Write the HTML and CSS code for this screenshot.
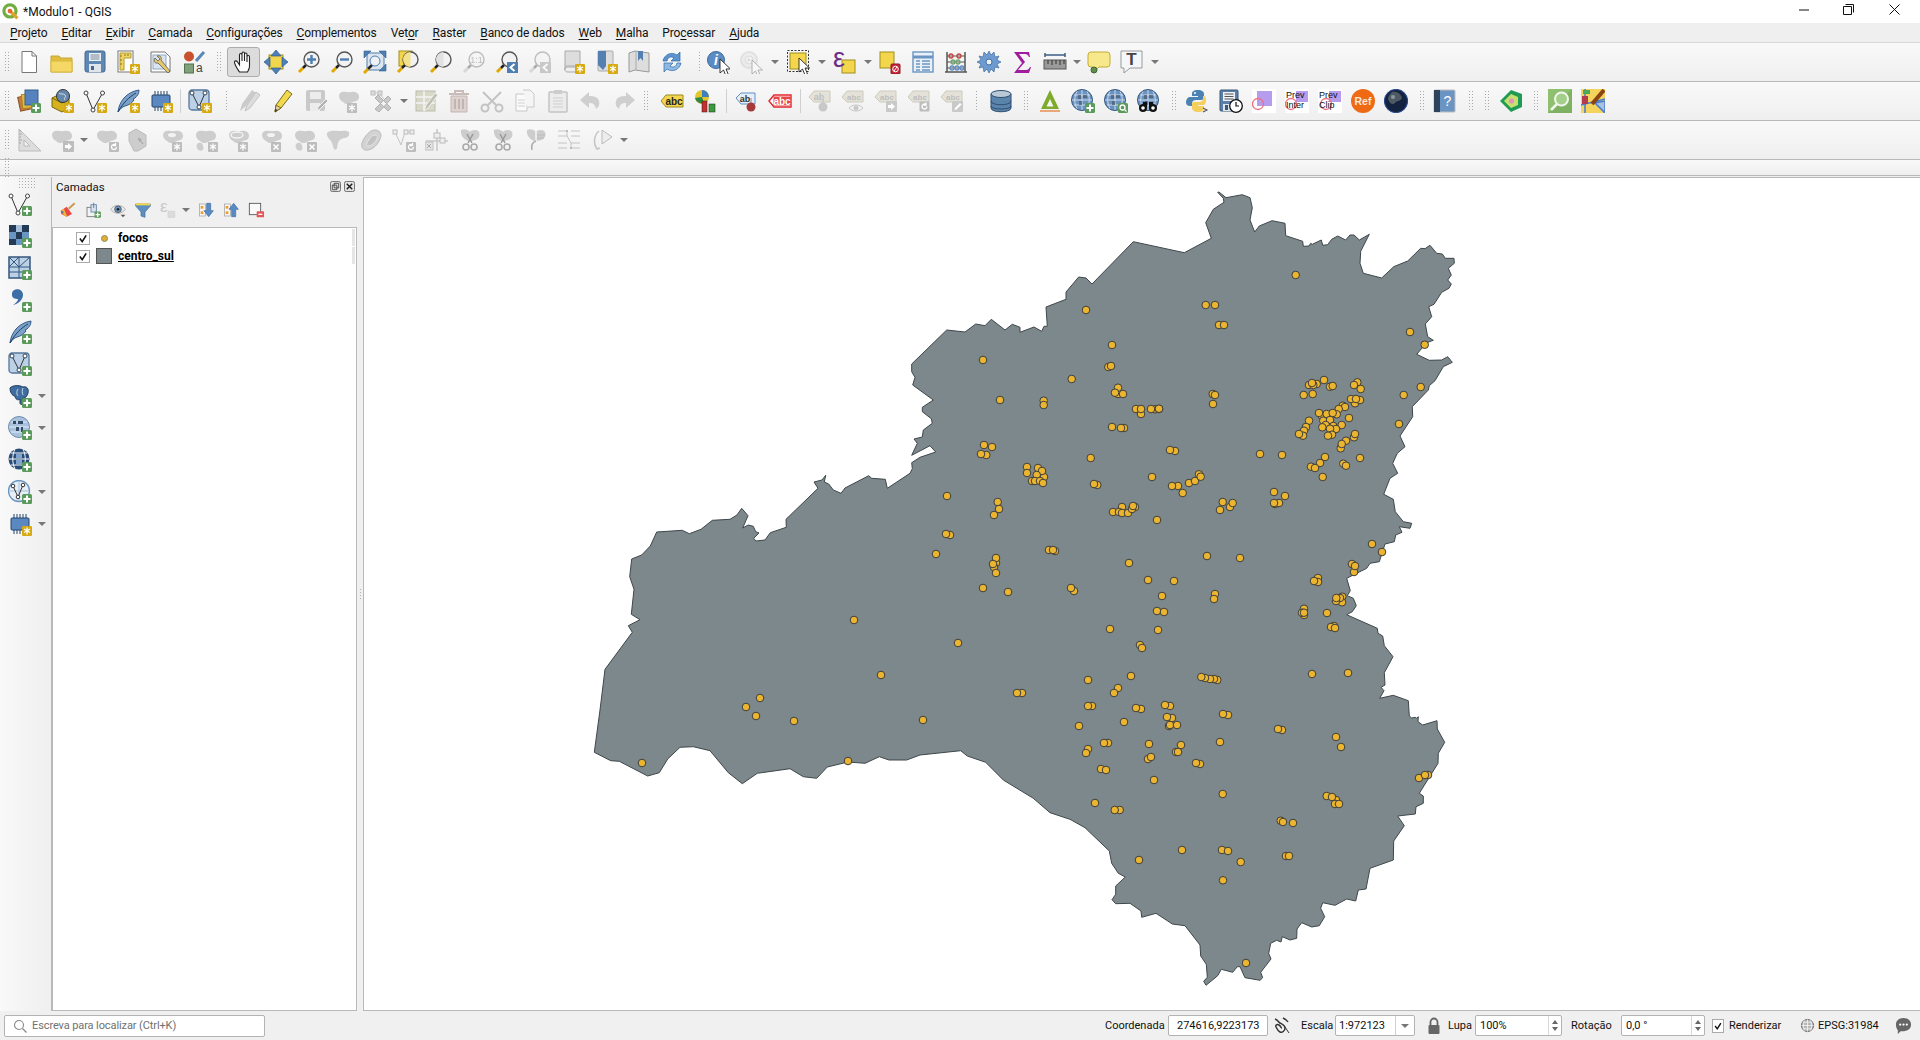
FILE: index.html
```html
<!DOCTYPE html>
<html lang="pt">
<head>
<meta charset="utf-8">
<title>*Modulo1 - QGIS</title>
<link rel="stylesheet" href="styles.css">
</head>
<body>
<svg class="defs" aria-hidden="true">
<defs>
<g id="bY"><rect x="14" y="14" width="10" height="10" rx="1" fill="#d6aa12"/><path d="M19 15.5v7M16 17l6 3.5M22 17l-6 3.5" stroke="#fff" stroke-width="1.3"/></g>
<g id="bG"><rect x="14" y="14" width="10" height="10" rx="1.5" fill="#5a9a5a"/><path d="M19 15.5v7M15.5 19h7" stroke="#fff" stroke-width="2"/></g>
<g id="bX"><rect x="14" y="14" width="10" height="10" rx="1" fill="#bdbdbd"/><path d="M16.5 16.5l5 5M21.5 16.5l-5 5" stroke="#fff" stroke-width="1.5"/></g>
<g id="bS"><rect x="14" y="14" width="10" height="10" rx="1" fill="#bdbdbd"/><path d="M19 15.5v7M16 17l6 3.5M22 17l-6 3.5" stroke="#fff" stroke-width="1.3"/></g>
<g id="bR"><rect x="14" y="14" width="10" height="10" rx="1" fill="#bdbdbd"/><path d="M21.500 19a2.500 2.500 0 1 1-1-2M20.500 15v2.500H18" fill="none" stroke="#fff" stroke-width="1.3"/></g>
<path id="blob" d="M2 7c0-4 4-5 8-4 3 1 5-1 8 0 4 1 5 5 3 8-2 2-5 1-7 3-3 2-6 1-8-1-2-1-4-3-4-6z" fill="#cdcdcd"/>
<g id="mag"><path d="M2 22l4-4" stroke="#e2a800" stroke-width="3"/><path d="M6 18l3-3" stroke="#222" stroke-width="2.500"/><circle cx="14.500" cy="9.500" r="7.500" fill="#f2f2f2" stroke="#555" stroke-width="1.400"/></g>
<g id="i-new"><path d="M5 1.500h10l4.500 4.500v16.500H5z" fill="#fff" stroke="#777"/><path d="M15 1.500V6h4.500" fill="none" stroke="#777"/></g>
<g id="i-open"><path d="M1 6h8l2 2h11v14H1z" fill="#e1bd3d" stroke="#c8a734"/><path d="M1 11h21v11H1z" fill="#f4d765" stroke="#d6b840"/></g>
<g id="i-save"><rect x="2" y="1" width="20" height="21" rx="2" fill="#5f89b4" stroke="#44698f"/><path d="M6 3h12v8H6z" fill="#e9eef3"/><path d="M7.500 5h9M7.500 7h9M7.500 9h9" stroke="#7a8b9c"/><rect x="6" y="14" width="12" height="8" fill="#dfe5ea"/><rect x="8" y="16" width="3" height="4" fill="#44698f"/></g>
<g id="i-layout"><rect x="2" y="1" width="15" height="21" fill="#fff" stroke="#777"/><path d="M4 3h11v5H8v12H4z" fill="#f0d467" stroke="#b49a2c"/><path d="M4 6h2M4 10h2M4 14h2M9 4v2M12 4v2" stroke="#8b7417"/><use href="#bY"/></g>
<g id="i-wrench"><path d="M2 2h14l5 5v15H2z" fill="#fff" stroke="#777"/><rect x="4" y="5" width="13" height="14" fill="#d9e4f0" stroke="#8fa9c6"/><path d="M8 6c3-1 5 1 4 4l9 11-2 2-10-10C6 14 4 11 6 8l3 3 2-2z" fill="#e4c66c" stroke="#5c5c5c" stroke-width=".8"/></g>
<g id="i-style"><circle cx="7" cy="6.500" r="5" fill="#c9512e"/><path d="M14 11L22 2" stroke="#5a86b8" stroke-width="3"/><rect x="2.500" y="14" width="9" height="9" fill="#7fa27a" stroke="#55704f"/><text x="14" y="22" class="svt n" font-size="12" fill="#444">a</text></g>
<g id="i-hand"><path transform="translate(1.500 0)" d="M7 22c-2-3-5-7-5-10 0-1.500 2-1.500 3 0l2 3V5c0-2 2.500-2 2.500 0v6V3.500c0-2 2.500-2 2.500 0V11V4.500c0-2 2.500-2 2.500 0V12V7c0-2 2.500-2 2.500 0v9c0 3-1 4-2 6z" fill="#fff" stroke="#222" stroke-width="1.100"/></g>
<g id="i-pansel"><rect x="5" y="5" width="14" height="14" fill="#f3d64b" stroke="#a08e1e"/><path d="M12 0l5 6H7zM12 24l5-6H7zM0 12l6-5v10zM24 12l-6-5v10z" fill="#4f81b8" stroke="#2f5a8a" stroke-width=".7"/></g>
<g id="i-zin"><use href="#mag"/><path d="M14.500 5v9M10 9.500h9" stroke="#4f7fb0" stroke-width="2.400"/></g>
<g id="i-zout"><use href="#mag"/><path d="M10 9.500h9" stroke="#4f7fb0" stroke-width="2.400"/></g>
<g id="i-zfull"><rect x="4" y="3" width="17" height="17" fill="#dde6ef" stroke="#4f7fb0"/><path d="M1 1h7L1 8zM23 1h-7l7 7zM23 21h-7l7-7z" fill="#4f7fb0" stroke="#335f8e" stroke-width=".6"/><path d="M5 19l5-5" stroke="#222" stroke-width="2.500"/><path d="M1 23l4-4" stroke="#e2a800" stroke-width="3"/><circle cx="12" cy="11" r="5" fill="#eef2f6" stroke="#4f7fb0"/></g>
<g id="i-zlayer"><rect x="3" y="1" width="13" height="15" fill="#f3d64b" stroke="#a08e1e"/><use href="#mag"/><path d="M14.500 2v15a7.500 7.500 0 0 1 0-15z" fill="#f3e28a"/></g>
<g id="i-zsel"><use href="#mag"/><path d="M14.500 2v15a7.500 7.500 0 0 1 0-15z" fill="#e1e1e1"/></g>
<g id="i-znat"><use href="#mag"/><text x="14.500" y="13" text-anchor="middle" class="svt n" font-size="9" fill="#555">1:1</text></g>
<g id="i-zlast"><use href="#mag"/><rect x="12" y="12" width="11" height="11" fill="#4f7fb0"/><path d="M19.500 14l-4 3.500 4 3.500" fill="none" stroke="#fff" stroke-width="2"/></g>
<g id="i-newmap"><path d="M4 1h15v15H6c-2 0-2 2-2 4z" fill="#ddd" stroke="#aaa"/><path d="M4 20c0-2 1-3 3-3h12v5H7c-2 0-3-1-3-2z" fill="#eee" stroke="#aaa"/><use href="#bY"/></g>
<g id="i-bmnew"><rect x="4" y="1" width="15" height="20" rx="1" fill="#ddd" stroke="#aaa"/><path d="M4 1h8v15l-3 4-5-5z" fill="#5380b0"/><use href="#bY"/></g>
<g id="i-bm"><path d="M2 3l6-2 14 2v19l-14-2-6 2z" fill="#ddd" stroke="#999"/><path d="M9 1v19" stroke="#aaa"/><path d="M11 1h5v10l-2.500-3-2.500 3z" fill="#5380b0"/></g>
<g id="i-refresh"><path d="M3 11C4 5 11 1 17 5l3-3v9h-9l3-3c-3-2-6-1-7 3z" fill="#5d93cf" stroke="#2d6aa6" stroke-width=".7"/><path d="M21 13c-1 6-8 10-14 6l-3 3v-9h9l-3 3c3 2 6 1 7-3z" fill="#8db8e4" stroke="#2d6aa6" stroke-width=".7"/></g>
<path id="cursor" d="M0 0l0 14 3.500-3 2.500 6 2.500-1-2.500-6h4.500z" fill="#fff" stroke="#222" stroke-width=".9"/>
<g id="i-info"><circle cx="10" cy="10" r="8.500" fill="#5b8bc4" stroke="#3e6b9e"/><text x="10" y="15" text-anchor="middle" class="svt" font-style="italic" font-size="14" fill="#fff">i</text><use href="#cursor" transform="translate(14 9)"/></g>
<g id="i-action"><circle cx="10" cy="10" r="8" fill="#dcdcdc" stroke="#bbb" stroke-width="2"/><circle cx="10" cy="10" r="4" fill="#f1f1f1" stroke="#aaa"/><path d="M8.500 8l4 2-4 2z" fill="#aaa"/><use href="#cursor" transform="translate(13 10)"/></g>
<g id="i-select"><rect x="3" y="3" width="16" height="16" fill="#f3d64b" stroke="#a08e1e"/><rect x=".500" y=".500" width="21" height="21" fill="none" stroke="#333" stroke-dasharray="2 1.500"/><use href="#cursor" transform="translate(12 8)"/></g>
<g id="i-selexp"><rect x="9" y="10" width="13" height="13" fill="#f3d64b" stroke="#a08e1e"/><text x="0" y="17" class="svt n" font-size="27" fill="#6b2d86">&#949;</text></g>
<g id="i-desel"><rect x="2" y="2" width="14" height="16" fill="#f3d64b" stroke="#a08e1e"/><rect x="13" y="14" width="9" height="10" rx="1" fill="#c8263a" stroke="#8e1625"/><circle cx="17.500" cy="19" r="2.800" fill="none" stroke="#fff"/><path d="M16 21l3-4" stroke="#fff"/></g>
<g id="i-table"><rect x="2" y="2" width="20" height="20" fill="#eaf0f7" stroke="#6a95c2" stroke-width="1.400"/><path d="M2 7h20" stroke="#6a95c2" stroke-width="3"/><path d="M5 11h4M11 11h8M5 14h4M11 14h8M5 17h4M11 17h8M5 20h4M11 20h8" stroke="#6a95c2" stroke-width="1.300"/></g>
<g id="i-calc"><path d="M3 2v20M21 2v20M1 22h22" stroke="#555" stroke-width="1.500"/><path d="M3 6h18M3 12h18M3 18h18" stroke="#555"/><circle cx="7" cy="6" r="2" fill="none" stroke="#c8453f" stroke-width="1.300"/><circle cx="15" cy="6" r="2" fill="none" stroke="#c8453f" stroke-width="1.300"/><circle cx="9" cy="12" r="2" fill="none" stroke="#6da56b" stroke-width="1.300"/><circle cx="14" cy="12" r="2" fill="none" stroke="#6da56b" stroke-width="1.300"/><circle cx="8" cy="18" r="2" fill="none" stroke="#5d8cc4" stroke-width="1.300"/><circle cx="13" cy="18" r="2" fill="none" stroke="#5d8cc4" stroke-width="1.300"/><circle cx="18" cy="18" r="2" fill="none" stroke="#5d8cc4" stroke-width="1.300"/></g>
<g id="i-gear"><path d="M12 1l2 4 3-3 1 5 4-1-2 4 4 2-4 2 2 4-4-1-1 5-3-3-2 4-2-4-3 3-1-5-4 1 2-4-4-2 4-2-2-4 4 1 1-5 3 3z" fill="#6d9ad0" stroke="#44709f" stroke-width=".7"/><circle cx="12" cy="12" r="3" fill="#eaf0f7" stroke="#44709f"/></g>
<g id="i-sigma"><path d="M4 2h15l1 5h-1c-1-2-2-3-4-3H9l6 8-7 8h8c2 0 3-1 4-3l1 0-2 6H4l8-10z" fill="#a01e9d"/></g>
<g id="i-measure"><path d="M2 3v4M22 3v4M2 5h20" stroke="#3d5e85" stroke-width="1.500"/><rect x="1" y="10" width="22" height="9" fill="#9a9a9a" stroke="#555"/><path d="M5 10v4M9 10v5M13 10v4M17 10v5M21 10v4" stroke="#333"/></g>
<g id="i-annot"><path d="M4 2h16a3 3 0 0 1 3 3v9a3 3 0 0 1-3 3H12l-6 6v-6H4a3 3 0 0 1-3-3V5a3 3 0 0 1 3-3z" fill="#f7e88c" stroke="#c3ad33"/><circle cx="7" cy="20" r="3" fill="#5f8f4c" stroke="#3d6530"/></g>
<g id="i-tannot"><path d="M1 1h21v17H10l-6 5v-5H1z" fill="#f4f7f9" stroke="#999"/><text x="11.500" y="15" text-anchor="middle" class="svt" font-family="Liberation Serif" font-size="17" fill="#444">T</text></g>
<g id="i-dsm"><rect x="2" y="7" width="12" height="14" fill="#c97a3f" stroke="#8a4f23" transform="rotate(-12 8 14)"/><rect x="5" y="5" width="12" height="14" fill="#e4b83a" stroke="#a9861d" transform="rotate(-6 11 12)"/><rect x="8" y="1" width="13" height="15" fill="#5683bd" stroke="#34608f"/><use href="#bG"/></g>
<g id="i-gpkg"><path d="M2 9l10-5 7 4v11l-7 4-10-5z" fill="#d6b21e" stroke="#7a6410"/><path d="M2 9l10 5 7-5" fill="none" stroke="#7a6410"/><circle cx="13" cy="7" r="6.500" fill="#6589ad" stroke="#333"/><path d="M9 4c2 2 4 0 6 2s-2 3 0 5" fill="none" stroke="#ddd"/><use href="#bY"/></g>
<g id="i-vbase"><path d="M3 4l7 17 9-16" fill="none" stroke="#333"/><path d="M3 4h0M19 5l3-1" stroke="#333"/><circle cx="3" cy="4" r="2" fill="#fff" stroke="#444"/><circle cx="10" cy="21" r="2" fill="#fff" stroke="#444"/><circle cx="19.500" cy="4" r="2" fill="#fff" stroke="#444"/></g>
<g id="i-shp"><use href="#i-vbase"/><use href="#bY"/></g>
<g id="i-shpG"><use href="#i-vbase"/><use href="#bG"/></g>
<g id="i-fbase"><path d="M2 23C3 13 10 3 23 1c0 4-2 6-4 8l-2 1 1 1c-2 3-5 5-9 6-3 1-5 3-7 6z" fill="#7ba1cb" stroke="#345c88"/><path d="M2 23C7 14 13 8 20 4" fill="none" stroke="#1f3f63"/></g>
<g id="i-feather"><use href="#i-fbase"/><use href="#bY"/></g>
<g id="i-featherG"><use href="#i-fbase"/><use href="#bG"/></g>
<g id="i-cbase"><rect x="3" y="6" width="18" height="12" rx="1" fill="#5b88c0" stroke="#24476d"/><path d="M6 2v4M9 2v4M12 2v4M15 2v4M18 2v4M6 18v4M9 18v4M12 18v4M15 18v4" stroke="#24476d"/></g>
<g id="i-chip"><use href="#i-cbase"/><use href="#bY"/></g>
<g id="i-vsq"><rect x="1" y="1" width="20" height="20" rx="3" fill="#bcd1e6" stroke="#56779c" stroke-width="1.300"/><path d="M4 4l7 14 6-14" fill="none" stroke="#334"/><circle cx="4" cy="4" r="2" fill="#fff" stroke="#345"/><circle cx="11" cy="18" r="2" fill="#fff" stroke="#345"/><circle cx="17" cy="4" r="2" fill="#fff" stroke="#345"/></g>
<g id="i-virt"><use href="#i-vsq"/><use href="#bY"/></g>
<g id="i-virtG"><use href="#i-vsq"/><use href="#bG"/></g>
<g id="i-pencil"><path d="M4 23l1-7L16 1l5 4-11 14z" fill="#f1d84c" stroke="#7a6a22"/><path d="M4 23l1-7 5 3z" fill="#e8cfa0" stroke="#7a6a22"/><path d="M4 23l.500-3 2 1z" fill="#222"/></g>
<g id="i-pencils"><path d="M2 22l2-7L14 1l4 3-11 14z" fill="#cbcbcb"/><path d="M7 22l2-6L18 3l4 3-10 13z" fill="#dcdcdc" stroke="#c3c3c3"/></g>
<g id="i-saveE"><rect x="2" y="1" width="19" height="21" rx="2" fill="#c9c9c9"/><rect x="6" y="3" width="11" height="7" fill="#ececec"/><rect x="6" y="14" width="10" height="8" fill="#ececec"/><path d="M13 22l1-4 8-8 2 2-8 8z" fill="#b2b2b2" stroke="#f2f2f2"/></g>
<g id="i-addF"><use href="#blob"/><use href="#bS" transform="translate(-4 0)"/></g>
<g id="i-vert"><path d="M3 4h6l5 6" fill="none" stroke="#c3c3c3"/><rect x="1" y="2" width="4" height="4" fill="#ddd" stroke="#bbb"/><rect x="8" y="2" width="4" height="4" fill="#ddd" stroke="#bbb"/><path d="M5 9l13 13 3-3L8 6zM5 20L18 7l3 3L9 23z" fill="#c8c8c8" stroke="#b0b0b0"/></g>
<g id="i-editA"><rect x="2" y="2" width="19" height="20" fill="#d8d8c8" stroke="#bcbcae"/><path d="M2 8h19M2 14h19M10 2v20" stroke="#f3f3f3" stroke-width="1.500"/><path d="M10 22l2-6 9-12 3 2-10 13z" fill="#c2c2b4" stroke="#f3f3f3"/></g>
<g id="i-trash"><path d="M2 5h20M8 5V2h8v3" fill="none" stroke="#c9bcb8" stroke-width="2"/><path d="M4 7h16v16H4z" fill="#ddd2cf" stroke="#c3b6b2"/><path d="M8 10v10M12 10v10M16 10v10" stroke="#b9aba7" stroke-width="1.500"/></g>
<g id="i-cut"><path d="M3 3l13 13M21 3L8 16" stroke="#c3c3c3" stroke-width="2"/><circle cx="5" cy="19" r="3.500" fill="none" stroke="#c3c3c3" stroke-width="2"/><circle cx="19" cy="19" r="3.500" fill="none" stroke="#c3c3c3" stroke-width="2"/></g>
<g id="i-copy"><path d="M3 5h8l3 3v14H3z" fill="#fafafa" stroke="#c8c8c8"/><path d="M10 1h7l4 4v13h-7" fill="#f5f5f5" stroke="#c8c8c8"/><path d="M5 11h7M5 14h7M5 17h7" stroke="#d0d0d0"/></g>
<g id="i-paste"><rect x="3" y="3" width="18" height="20" rx="1" fill="#ececec" stroke="#c3c3c3" stroke-width="1.500"/><rect x="8" y="1" width="8" height="4" fill="#ccc"/><path d="M7 9h10M7 12h10M7 15h10M7 18h10" stroke="#cfcfcf"/></g>
<g id="i-undo"><path d="M10 3L1 11l9 8v-5c4 0 6 1 7 6 3-2 4-5 3-8-1-4-5-5-10-5z" fill="#cfcfcf"/></g>
<g id="i-redo"><path d="M14 3l9 8-9 8v-5c-4 0-6 1-7 6-3-2-4-5-3-8 1-4 5-5 10-5z" fill="#cfcfcf"/></g>
<g id="i-labelY"><path d="M1 12l5-6h17v12H6z" fill="#f3d64b" stroke="#9a8a20"/><text x="14" y="15.500" text-anchor="middle" class="svt" font-family="Liberation Serif" font-size="10" fill="#222">abc</text></g>
<g id="i-diag"><circle cx="9" cy="8" r="7" fill="#e4c52c"/><path d="M9 8V1a7 7 0 0 1 7 7z" fill="#3f7fbd"/><path d="M9 8l-7 1a7 7 0 0 0 9 5z" fill="#2d8a40"/><rect x="9" y="12" width="5" height="11" fill="#c72e2e" stroke="#222" stroke-width=".5"/><rect x="16" y="15" width="6" height="8" fill="#3c9c3c" stroke="#222" stroke-width=".5"/></g>
<g id="i-pin"><path d="M1 9l5-5h14v11H6z" fill="#e6eef7" stroke="#5f8fc4"/><text x="10" y="13" text-anchor="middle" class="svt" font-size="9" fill="#333">ab</text><path d="M16 9v8" stroke="#bbb" stroke-width="2"/><circle cx="16" cy="18" r="4.500" fill="#a63a3a"/></g>
<g id="i-labelR"><path d="M1 12l5-6h17v12H6z" fill="#fff" stroke="#e0272c" stroke-width="1.400"/><path d="M5.500 7.500h17v9h-17z" fill="#e93a3e" opacity=".95"/><text x="14" y="15.500" text-anchor="middle" class="svt" font-family="Liberation Serif" font-size="10" fill="#fff">abc</text></g>
<g id="lg"><path d="M1 8l5-6h16v11H6z" fill="#e4e2d8" stroke="#cdcabd"/></g>
<g id="i-lpin"><use href="#lg"/><text x="11" y="11" text-anchor="middle" class="svt" font-size="9" fill="#bdbdbd">ab</text><path d="M15 8v8" stroke="#ccc" stroke-width="2"/><circle cx="15" cy="18" r="4.500" fill="#c8c8c8"/></g>
<g id="i-leye"><use href="#lg"/><text x="13" y="11" text-anchor="middle" class="svt" font-size="8" fill="#bdbdbd">abc</text><path d="M8 19c3-4 11-4 14 0-3 4-11 4-14 0z" fill="#f2f2f2" stroke="#c8c8c8"/><circle cx="15" cy="19" r="2.500" fill="#c8c8c8"/></g>
<g id="i-larr"><use href="#lg"/><text x="13" y="11" text-anchor="middle" class="svt" font-size="8" fill="#bdbdbd">abc</text><rect x="12" y="12" width="11" height="11" rx="1" fill="#c9c9c9"/><path d="M14 16h3v-2l4 3.500-4 3.500v-2h-3z" fill="#fff"/></g>
<g id="i-lrot"><use href="#lg"/><text x="13" y="11" text-anchor="middle" class="svt" font-size="8" fill="#bdbdbd">abc</text><use href="#bR" transform="translate(-1.500 -1.500)"/></g>
<g id="i-lpen"><use href="#lg"/><text x="13" y="11" text-anchor="middle" class="svt" font-size="8" fill="#bdbdbd">abc</text><rect x="12" y="12" width="11" height="11" rx="1" fill="#c9c9c9"/><path d="M14.500 21l.500-2 5-5 1.500 1.500-5 5z" fill="#fff"/></g>
<g id="i-db"><path d="M2 5v14c0 5 20 5 20 0V5z" fill="#5b84ad" stroke="#2f4f70"/><path d="M2 12c0 5 20 5 20 0M2 17c0 4 20 4 20 0" fill="none" stroke="#2f4f70"/><ellipse cx="12" cy="5" rx="10" ry="3.500" fill="#b9c9d8" stroke="#2f4f70"/></g>
<g id="i-grass"><path d="M12 1L3 20h18z" fill="#7eab2c"/><path d="M12 10l-3.500 7.500h7z" fill="#f6f6f6"/><path d="M2 22h20" stroke="#eaa878" stroke-width="2"/></g>
<g id="globe"><circle cx="11" cy="11" r="10.500" fill="#6b93c2" stroke="#33567e"/><path d="M1 11h20M11 1v20M3 6h16M3 16h16M6 2.500c-3 5-3 12 0 17M16 2.500c3 5 3 12 0 17" fill="none" stroke="#d4e0ed" stroke-width=".9"/><path d="M7 6h3v4H7zM12 6h4v3h-4zM8 12h3v4H8z" fill="#4a5968" opacity=".7"/></g>
<g id="i-gplus"><use href="#globe"/><use href="#bG"/></g>
<g id="i-gsearch"><use href="#globe"/><rect x="14" y="14" width="10" height="10" rx="1.500" fill="#5a9a5a"/><circle cx="18.500" cy="18.500" r="2.500" fill="none" stroke="#fff" stroke-width="1.300"/><path d="M20.500 20.500l2 2" stroke="#fff" stroke-width="1.300"/></g>
<g id="i-gbin"><use href="#globe"/><circle cx="6" cy="19" r="4" fill="#111"/><circle cx="16" cy="19" r="4" fill="#111"/><path d="M6 13h4v5H6zM12 13h4v5h-4z" fill="#111"/><circle cx="6" cy="19" r="1.800" fill="#fff"/><circle cx="16" cy="19" r="1.800" fill="#fff"/></g>
<g id="i-py"><path d="M12 1c-5 0-6 2-6 4v2h6v1H4c-2 0-4 2-4 5s2 4 4 4h2v-3c0-2 2-3 4-3h5c2 0 3-1 3-3V5c0-2-2-4-6-4z" fill="#4b82b4"/><path d="M12 23c5 0 6-2 6-4v-2h-6v-1h5c2 0 3-2 3-5s-1-4-2-4h-1v3c0 2-2 3-4 3H8c-2 0-2 1-2 3v3c0 2 2 4 6 4z" fill="#f4cf5b"/><circle cx="9" cy="4" r="1" fill="#fff"/><path d="M17 19l4 2-4 2" fill="none" stroke="#555" stroke-width="1.100"/></g>
<g id="i-clock"><rect x="1" y="1" width="18" height="21" rx="1" fill="#5b7fa8" stroke="#3a5877"/><rect x="4" y="3" width="12" height="9" fill="#eef1f5"/><path d="M5.500 5h9M5.500 7.500h9M5.500 10h9" stroke="#555"/><rect x="4" y="15" width="9" height="7" fill="#dfe5ea"/><rect x="6" y="16" width="3" height="5" fill="#3a5877"/><circle cx="17" cy="17" r="6.300" fill="#fff" stroke="#111" stroke-width="1.300"/><path d="M17 13v4h3" fill="none" stroke="#111" stroke-width="1.200"/></g>
<g id="i-prev"><rect width="24" height="24" fill="#fff"/><rect x="5" y="2" width="15" height="15" fill="#b69ced"/><circle cx="6" cy="15" r="5.500" fill="none" stroke="#ee7080" stroke-width="1.300"/></g>
<g id="i-prevI"><rect width="24" height="24" fill="#fff"/><rect x="11" y="2" width="12" height="11" fill="#b69ced"/><circle cx="6" cy="15" r="5.500" fill="none" stroke="#ee7080" stroke-width="1.300"/><text x="1" y="9" class="svt n" font-size="9" font-family="Liberation Mono" fill="#111">Prev</text><text x="1" y="19" class="svt n" font-size="9" font-family="Liberation Mono" fill="#111">Inter</text></g>
<g id="i-prevC"><rect width="24" height="24" fill="#fff"/><rect x="11" y="2" width="12" height="11" fill="#b69ced"/><circle cx="8" cy="15" r="5.500" fill="none" stroke="#ee7080" stroke-width="1.300"/><text x="1" y="9" class="svt n" font-size="9" font-family="Liberation Mono" fill="#111">Prev</text><text x="1" y="19" class="svt n" font-size="9" font-family="Liberation Mono" fill="#111">Clip</text></g>
<g id="i-ref"><circle cx="12" cy="12" r="12" fill="#ef6a15"/><text x="12" y="16" text-anchor="middle" class="svt" font-size="10.500" fill="#f7e7d9">Ref</text></g>
<g id="i-earth"><circle cx="12" cy="12" r="11.500" fill="#14233f" stroke="#2a4b8c" stroke-width="1.200"/><path d="M8 3c5-1 9 2 10 6-2 4-5 2-7 5-3 3-6-1-7-4 0-3 2-5 4-7z" fill="#4d5a64"/><circle cx="9" cy="8" r="2" fill="#8b97a0"/></g>
<g id="i-book"><rect x="1" y="1" width="21" height="22" rx="1" fill="#6a95c2" stroke="#bcbcbc"/><rect x="1" y="1" width="6" height="22" fill="#2d435b"/><text x="14.500" y="17" text-anchor="middle" class="svt n" font-family="Liberation Serif" font-size="14" fill="#fff">?</text></g>
<g id="i-pent"><path d="M12 1l11 4v13l-11 5L1 12z" fill="#1f9b54"/><path d="M12 5l7 3v8l-7 3-7-7z" fill="#c6e070"/><circle cx="12.500" cy="12" r="2.500" fill="#e58fc0"/></g>
<g id="i-sgreen"><rect width="24" height="24" fill="#8fc06f"/><path d="M24 0v24H0z" fill="#6ea254" opacity=".5"/><circle cx="13.500" cy="10" r="6.500" fill="#a4cf8a" stroke="#f2f7ee" stroke-width="2"/><path d="M3 21l6-6" stroke="#f2f7ee" stroke-width="2.500"/></g>
<g id="i-mapb"><rect width="24" height="24" fill="#f4d45d"/><path d="M0 16l24-6M4 0v24M14 14l10 10V12z" stroke="#4c7ed0" stroke-width="1.600" fill="#a8c3e2"/><rect x="1" y="7" width="6" height="8" fill="#b23c4c"/><rect x="2" y="1" width="7" height="4" fill="#4caa5a"/><path d="M11 15L23 1" stroke="#8b4513" stroke-width="4"/></g>
<g id="s-sq"><path d="M2 1v22h22z" fill="#ddd" stroke="#bbb"/><path d="M7 12v6h6z" fill="#f0f0f0" stroke="#bbb"/><path d="M2 3h2M2 6h3M2 9h2M2 12h3M2 15h2" stroke="#aaa"/></g>
<g id="s-1"><use href="#blob"/><rect x="13" y="13" width="11" height="11" rx="1" fill="#bdbdbd"/><path d="M15 17h3v-2l4 3.500-4 3.500v-2h-3z" fill="#fff"/></g>
<g id="s-2"><use href="#blob"/><use href="#bR"/></g>
<g id="s-3"><path d="M8 1l10 6v11l-8 5H6L1 13V5z" fill="#cdcdcd" stroke="#bbb"/><path d="M10 10l5 6" stroke="#999"/><path d="M10 10l4 1-3 3z" fill="#aaa"/></g>
<g id="s-4"><use href="#blob"/><ellipse cx="11" cy="7" rx="4" ry="2" fill="#f3f3f3"/><use href="#bS" transform="translate(-3 0)"/></g>
<g id="s-5"><use href="#blob"/><path d="M2 18c0-3 4-5 6-3s3 7 0 8-6-2-6-5z" fill="#cdcdcd" stroke="#f4f4f4"/><use href="#bS"/></g>
<g id="s-6"><use href="#blob"/><ellipse cx="10" cy="7" rx="6" ry="3" fill="none" stroke="#f3f3f3" stroke-width="1.500"/><use href="#bS" transform="translate(-3 0)"/></g>
<g id="s-7"><use href="#blob"/><ellipse cx="11" cy="7" rx="4" ry="2" fill="#f3f3f3"/><use href="#bX" transform="translate(-3 0)"/></g>
<g id="s-8"><use href="#blob"/><path d="M2 18c0-3 4-5 6-3s3 7 0 8-6-2-6-5z" fill="#cdcdcd" stroke="#f4f4f4"/><use href="#bX"/></g>
<g id="s-9"><path d="M1 5c3-3 8-2 11-2s8-1 11 1c1 4-2 6-5 6-3 1-5 2-6 5s0 6-3 7c-2-2-2-4-3-7-1-3-6-6-5-10z" fill="#cdcdcd"/></g>
<g id="s-10"><path d="M17 2c5 1 6 5 4 9-2 5-6 10-12 11-5 1-7-3-6-7 2-6 8-14 14-13z" fill="#d3d3d3" stroke="#bbb"/><path d="M16 7c2 0 3 2 2 4-2 3-4 6-8 7-2 0-3-1-2-3 2-4 5-8 8-8z" fill="#c2c2c2" stroke="#e6e6e6"/></g>
<g id="s-11"><path d="M3 4l6 13 4-13h6" fill="none" stroke="#c4c4c4"/><rect x="1" y="2" width="4" height="4" fill="#eee" stroke="#bbb"/><rect x="12" y="2" width="4" height="4" fill="#eee" stroke="#bbb"/><rect x="18" y="2" width="4" height="4" fill="#eee" stroke="#bbb"/><use href="#bR"/></g>
<g id="s-12"><path d="M12 1v22M1 13h22" stroke="#c8c8c8" stroke-width="1.600"/><rect x="9" y="5" width="6" height="5" fill="#eee" stroke="#bbb"/><rect x="15" y="10" width="5" height="5" fill="#eee" stroke="#bbb"/><rect x="0" y="14" width="8" height="8" fill="#e3e3e3" stroke="#c0c0c0"/><path d="M2 16l4 4M6 16l-4 4" stroke="#aaa"/></g>
<g id="s-13"><path d="M3 2c3-2 8 0 9 2 1-2 7-3 9 0 2 5-2 9-9 9-5 0-10-5-9-11z" fill="#cdcdcd"/><path d="M9 6l5 9M15 6l-5 9" stroke="#999" stroke-width="1.500"/><circle cx="8" cy="19" r="3" fill="none" stroke="#aaa" stroke-width="1.600"/><circle cx="16" cy="19" r="3" fill="none" stroke="#aaa" stroke-width="1.600"/></g>
<g id="s-14"><path d="M3 2c3-2 8 0 9 2 1-2 7-3 9 0 2 5-2 9-9 9-5 0-10-5-9-11z" fill="#cdcdcd"/><path d="M12 3v12" stroke="#f4f4f4" stroke-width="1.500"/><path d="M12 13c-3 1-5 4-4 9" fill="none" stroke="#aaa" stroke-width="1.500"/><path d="M13 7h8M13 10h7" stroke="#bbb"/></g>
<g id="s-15"><path d="M1 3h9M14 3h9M1 8h9M14 8h9M1 15h9M14 15h9M1 20h9M14 20h9M10 3v5M14 15v5M10 8l4 7" fill="none" stroke="#c4c4c4"/><rect x="9" y="2" width="2" height="2" fill="#bbb"/><rect x="13" y="19" width="2" height="2" fill="#bbb"/></g>
<g id="s-16"><path d="M12 2v14l10-7zM12 18" fill="#ededed" stroke="#bbb"/><path d="M9 3C4 7 3 15 7 21l3-1" fill="none" stroke="#c4c4c4" stroke-width="1.500"/></g>
<g id="l-raster"><rect x="1" y="1" width="20" height="20" fill="#6a95c2"/><path d="M1 1h7v7H1zM14 1h7v7h-7zM8 8h6v7H8zM1 15h7v6H1z" fill="#243b57"/><path d="M8 1h6v7H8z" fill="#a6c0dc"/><use href="#bG"/></g>
<g id="l-mesh"><rect x="1" y="1" width="21" height="21" fill="#bcd1e6" stroke="#33567e" stroke-width="1.500"/><path d="M1 1l10 10M11 1L1 11M11 1v21M22 1L11 11M1 11h21M1 16h21" stroke="#33567e"/><use href="#bG"/></g>
<g id="l-comma"><path d="M5 3c3-3 10-2 10 4 0 5-5 9-10 10 3-2 5-4 5-6-3 0-6-1-6-4 0-2 0-3 1-4z" fill="#3d6ea5"/><use href="#bG"/></g>
<g id="l-pg"><path d="M2 4c3-3 9-3 13-1 4-1 6 2 5 6-1 3-2 5-5 5v5c0 2-3 2-3 0v-4c-2 2-5 0-5-3-3 0-5-4-5-8z" fill="#3f6da0" stroke="#1f3f63"/><path d="M10 5c-2 3-1 6 0 7M15 4c-1 2-1 5 0 7" stroke="#cfdbe8" fill="none"/><use href="#bG"/></g>
<g id="l-wms"><circle cx="11" cy="11" r="10.500" fill="#a9c1dc" stroke="#6a8cb0"/><path d="M3 6h16M1 11h20M3 16h16" stroke="#e3ecf5"/><path d="M5 5h3v3H5zM10 5h5v3h-5zM8 11h3v4H8zM13 11h2v5h-2z" fill="#314a66"/><use href="#bG"/></g>
<g id="l-wcs"><circle cx="11" cy="11" r="10.500" fill="#294d78"/><path d="M1 11h20M3 5h16M3 17h16" stroke="#fff"/><path d="M7 1c-3 6-3 14 0 20M15 1c3 6 3 14 0 20" stroke="#fff" fill="none"/><path d="M8 6h6v4H8zM8 12h6v4H8z" fill="#7fa5cf"/><use href="#bG"/></g>
<g id="l-wfs"><circle cx="11" cy="11" r="10.500" fill="#e6eef7" stroke="#6a95c2" stroke-width="1.300"/><path d="M1 11h20M11 1v20" stroke="#a9c1dc"/><path d="M5 6l5 11 5-12" fill="none" stroke="#333"/><circle cx="5" cy="6" r="1.800" fill="#fff" stroke="#333"/><circle cx="10" cy="17" r="1.800" fill="#fff" stroke="#333"/><circle cx="15" cy="5" r="1.800" fill="#fff" stroke="#333"/><use href="#bG"/></g>
<g id="p-brush"><path d="M1 13l9-6 8 11-8 4-8-4z" fill="#e44"/><path d="M1 13l5-3 5 12-4-1z" fill="#e8b83a"/><path d="M2 14l3 2" stroke="#3c6ea8" stroke-width="2"/><path d="M13 10l9-8" stroke="#c99c50" stroke-width="3"/></g>
<g id="p-dup"><rect x="3" y="8" width="13" height="14" fill="#f2f2f2" stroke="#777" stroke-width="1.300"/><rect x="9" y="4" width="8" height="11" fill="#d9e2ec" stroke="#5f82a8" stroke-width="1.300"/><path d="M13 1v8" stroke="#5f82a8" stroke-width="1.400"/><use href="#bG" transform="translate(1 1) scale(.95)"/></g>
<g id="p-eye"><path d="M1 11c5-8 17-8 22 0-5 8-17 8-22 0z" fill="#e9e9e9" stroke="#999"/><circle cx="12" cy="11" r="5" fill="#6a95c2" stroke="#444"/><circle cx="12" cy="11" r="2" fill="#222"/><path d="M16 19h7l-3.500 4z" fill="#555"/></g>
<g id="p-funnel"><path d="M1 3h22v3l-8 9v8l-6-2v-6L1 6z" fill="#5f8fbf" stroke="#3e6b9e"/><path d="M1 2h22v3H1z" fill="#f0d64a"/></g>
<g id="p-exp"><text x="0" y="15" class="svt n" font-size="26" fill="#c9c9c9">&#949;</text><path d="M12 14h10v9H12z" fill="#dcdcdc" stroke="#cfcfcf"/></g>
<g id="p-down"><rect x="2" y="3" width="9" height="18" fill="#f6f6f6" stroke="#999"/><rect x="4" y="6" width="4" height="4" fill="#ef9d2b"/><rect x="4" y="14" width="4" height="4" fill="#ef9d2b"/><path d="M13 2h6v11h4l-7 9-7-9h4z" fill="#5b8bc4" stroke="#3e6b9e"/></g>
<g id="p-up"><rect x="2" y="3" width="9" height="18" fill="#f6f6f6" stroke="#999"/><rect x="4" y="6" width="4" height="4" fill="#ef9d2b"/><rect x="4" y="14" width="4" height="4" fill="#ef9d2b"/><path d="M13 22h6V11h4l-7-9-7 9h4z" fill="#5b8bc4" stroke="#3e6b9e"/></g>
<g id="p-rem"><rect x="2" y="2" width="17" height="17" fill="#fafafa" stroke="#555" stroke-width="1.300"/><rect x="13" y="14" width="11" height="9" rx="1" fill="#e4565a"/><path d="M15.500 18.500h6" stroke="#fff" stroke-width="2"/></g>
</defs>
</svg>

<div class="app">
<header class="titlebar">
  <svg class="qlogo" viewBox="0 0 16 16"><circle cx="7.500" cy="7.500" r="5.700" fill="none" stroke="#6fae3f" stroke-width="3"/><path d="M7.500 7.500l7 7" stroke="#e2a02d" stroke-width="3"/><circle cx="7.500" cy="7.500" r="2.200" fill="#e9672f"/></svg>
  <span class="title">*Modulo1 - QGIS</span>
  <div class="winbtns">
    <svg viewBox="0 0 12 12"><path d="M2 6h10" stroke="#111"/></svg>
    <svg viewBox="0 0 12 12"><path d="M2.500 .5h8v8M.5 2.500h8v8h-8z" fill="none" stroke="#111"/></svg>
    <svg viewBox="0 0 12 12"><path d="M.5 .5l10 10M10.500 .5l-10 10" stroke="#111"/></svg>
  </div>
</header>
<nav class="menubar">
  <span><u>P</u>rojeto</span><span><u>E</u>ditar</span><span><u>E</u>xibir</span><span><u>C</u>amada</span><span><u>C</u>onfigurações</span><span><u>C</u>omplementos</span><span>Vet<u>o</u>r</span><span><u>R</u>aster</span><span><u>B</u>anco de dados</span><span><u>W</u>eb</span><span><u>M</u>alha</span><span>Pro<u>c</u>essar</span><span><u>A</u>juda</span>
</nav>

<div class="tb">
  <i class="hd h8"></i>
  <b><svg viewBox="0 0 24 24"><use href="#i-new"/></svg></b><b><svg viewBox="0 0 24 24"><use href="#i-open"/></svg></b><b><svg viewBox="0 0 24 24"><use href="#i-save"/></svg></b><b><svg viewBox="0 0 24 24"><use href="#i-layout"/></svg></b><b><svg viewBox="0 0 24 24"><use href="#i-wrench"/></svg></b><b><svg viewBox="0 0 24 24"><use href="#i-style"/></svg></b>
  <i class="hd h15 t1"></i>
  <b class="on"><svg viewBox="0 0 24 24"><use href="#i-hand"/></svg></b><b><svg viewBox="0 0 24 24"><use href="#i-pansel"/></svg></b><b><svg viewBox="0 0 24 24"><use href="#i-zin"/></svg></b><b><svg viewBox="0 0 24 24"><use href="#i-zout"/></svg></b><b><svg viewBox="0 0 24 24"><use href="#i-zfull"/></svg></b><b><svg viewBox="0 0 24 24"><use href="#i-zlayer"/></svg></b><b><svg viewBox="0 0 24 24"><use href="#i-zsel"/></svg></b><b class="off"><svg viewBox="0 0 24 24"><use href="#i-znat"/></svg></b><b><svg viewBox="0 0 24 24"><use href="#i-zlast"/></svg></b><b class="off"><svg viewBox="0 0 24 24"><use href="#i-zlast"/></svg></b><b><svg viewBox="0 0 24 24"><use href="#i-newmap"/></svg></b><b><svg viewBox="0 0 24 24"><use href="#i-bmnew"/></svg></b><b><svg viewBox="0 0 24 24"><use href="#i-bm"/></svg></b><b><svg viewBox="0 0 24 24"><use href="#i-refresh"/></svg></b>
  <i class="hd h13"></i>
  <b><svg viewBox="0 0 24 24"><use href="#i-info"/></svg></b><b class="off"><svg viewBox="0 0 24 24"><use href="#i-action"/></svg></b><em class="ar a15"></em><b><svg viewBox="0 0 24 24"><use href="#i-select"/></svg></b><em class="ar a13"></em><b><svg viewBox="0 0 24 24"><use href="#i-selexp"/></svg></b><em class="ar a12"></em><b><svg viewBox="0 0 24 24"><use href="#i-desel"/></svg></b><b><svg viewBox="0 0 24 24"><use href="#i-table"/></svg></b><b><svg viewBox="0 0 24 24"><use href="#i-calc"/></svg></b><b><svg viewBox="0 0 24 24"><use href="#i-gear"/></svg></b><b><svg viewBox="0 0 24 24"><use href="#i-sigma"/></svg></b><b><svg viewBox="0 0 24 24"><use href="#i-measure"/></svg></b><em class="ar a11"></em><b><svg viewBox="0 0 24 24"><use href="#i-annot"/></svg></b><b><svg viewBox="0 0 24 24"><use href="#i-tannot"/></svg></b><em class="ar a12"></em>
</div>

<div class="tb">
  <i class="hd h8"></i>
  <b><svg viewBox="0 0 24 24"><use href="#i-dsm"/></svg></b><b><svg viewBox="0 0 24 24"><use href="#i-gpkg"/></svg></b><b><svg viewBox="0 0 24 24"><use href="#i-shp"/></svg></b><b><svg viewBox="0 0 24 24"><use href="#i-feather"/></svg></b><b><svg viewBox="0 0 24 24"><use href="#i-chip"/></svg></b>
  <i class="sp w6"></i>
  <b><svg viewBox="0 0 24 24"><use href="#i-virt"/></svg></b>
  <i class="hd h18"></i>
  <b><svg viewBox="0 0 24 24"><use href="#i-pencils"/></svg></b><b><svg viewBox="0 0 24 24"><use href="#i-pencil"/></svg></b><b><svg viewBox="0 0 24 24"><use href="#i-saveE"/></svg></b><b><svg viewBox="0 0 24 24"><use href="#i-addF"/></svg></b><b><svg viewBox="0 0 24 24"><use href="#i-vert"/></svg></b><em class="ar a11"></em><b><svg viewBox="0 0 24 24"><use href="#i-editA"/></svg></b><b><svg viewBox="0 0 24 24"><use href="#i-trash"/></svg></b><b><svg viewBox="0 0 24 24"><use href="#i-cut"/></svg></b><b><svg viewBox="0 0 24 24"><use href="#i-copy"/></svg></b><b><svg viewBox="0 0 24 24"><use href="#i-paste"/></svg></b><b><svg viewBox="0 0 24 24"><use href="#i-undo"/></svg></b><b><svg viewBox="0 0 24 24"><use href="#i-redo"/></svg></b>
  <i class="hd h14"></i>
  <b><svg viewBox="0 0 24 24"><use href="#i-labelY"/></svg></b><b><svg viewBox="0 0 24 24"><use href="#i-diag"/></svg></b>
  <i class="sp w9"></i>
  <b><svg viewBox="0 0 24 24"><use href="#i-pin"/></svg></b><b><svg viewBox="0 0 24 24"><use href="#i-labelR"/></svg></b>
  <i class="sp w7"></i>
  <b><svg viewBox="0 0 24 24"><use href="#i-lpin"/></svg></b><b><svg viewBox="0 0 24 24"><use href="#i-leye"/></svg></b><b><svg viewBox="0 0 24 24"><use href="#i-larr"/></svg></b><b><svg viewBox="0 0 24 24"><use href="#i-lrot"/></svg></b><b><svg viewBox="0 0 24 24"><use href="#i-lpen"/></svg></b>
  <i class="hd h15"></i>
  <b><svg viewBox="0 0 24 24"><use href="#i-db"/></svg></b>
  <i class="hd h16"></i>
  <b><svg viewBox="0 0 24 24"><use href="#i-grass"/></svg></b><b><svg viewBox="0 0 24 24"><use href="#i-gplus"/></svg></b><b><svg viewBox="0 0 24 24"><use href="#i-gsearch"/></svg></b><b><svg viewBox="0 0 24 24"><use href="#i-gbin"/></svg></b>
  <i class="hd h16"></i>
  <b><svg viewBox="0 0 24 24"><use href="#i-py"/></svg></b><b><svg viewBox="0 0 24 24"><use href="#i-clock"/></svg></b><b><svg viewBox="0 0 24 24"><use href="#i-prev"/></svg></b><b><svg viewBox="0 0 24 24"><use href="#i-prevI"/></svg></b><b><svg viewBox="0 0 24 24"><use href="#i-prevC"/></svg></b><b><svg viewBox="0 0 24 24"><use href="#i-ref"/></svg></b><b><svg viewBox="0 0 24 24"><use href="#i-earth"/></svg></b>
  <i class="hd h16"></i>
  <b><svg viewBox="0 0 24 24"><use href="#i-book"/></svg></b>
  <i class="hd h16"></i><i class="hd h16"></i>
  <b><svg viewBox="0 0 24 24"><use href="#i-pent"/></svg></b>
  <i class="hd h16"></i>
  <b><svg viewBox="0 0 24 24"><use href="#i-sgreen"/></svg></b><b><svg viewBox="0 0 24 24"><use href="#i-mapb"/></svg></b>
</div>

<div class="tb">
  <i class="hd h8"></i>
  <b><svg viewBox="0 0 24 24"><use href="#s-sq"/></svg></b><b><svg viewBox="0 0 24 24"><use href="#s-1"/></svg></b><em class="ar a12"></em><b><svg viewBox="0 0 24 24"><use href="#s-2"/></svg></b><b><svg viewBox="0 0 24 24"><use href="#s-3"/></svg></b><b><svg viewBox="0 0 24 24"><use href="#s-4"/></svg></b><b><svg viewBox="0 0 24 24"><use href="#s-5"/></svg></b><b><svg viewBox="0 0 24 24"><use href="#s-6"/></svg></b><b><svg viewBox="0 0 24 24"><use href="#s-7"/></svg></b><b><svg viewBox="0 0 24 24"><use href="#s-8"/></svg></b><b><svg viewBox="0 0 24 24"><use href="#s-9"/></svg></b><b><svg viewBox="0 0 24 24"><use href="#s-10"/></svg></b><b><svg viewBox="0 0 24 24"><use href="#s-11"/></svg></b><b><svg viewBox="0 0 24 24"><use href="#s-12"/></svg></b><b><svg viewBox="0 0 24 24"><use href="#s-13"/></svg></b><b><svg viewBox="0 0 24 24"><use href="#s-13"/></svg></b><b><svg viewBox="0 0 24 24"><use href="#s-14"/></svg></b><b><svg viewBox="0 0 24 24"><use href="#s-15"/></svg></b><b><svg viewBox="0 0 24 24"><use href="#s-16"/></svg></b><em class="ar a12"></em>
</div>
<div class="tb short"><i class="hd h8"></i></div>

<main class="main">
  <aside class="lefttb">
    <i class="hdh"></i>
    <div class="lrow"><svg viewBox="0 0 24 24"><use href="#i-shpG"/></svg></div>
    <div class="lrow"><svg viewBox="0 0 24 24"><use href="#l-raster"/></svg></div>
    <div class="lrow"><svg viewBox="0 0 24 24"><use href="#l-mesh"/></svg></div>
    <div class="lrow"><svg viewBox="0 0 24 24"><use href="#l-comma"/></svg></div>
    <div class="lrow"><svg viewBox="0 0 24 24"><use href="#i-featherG"/></svg></div>
    <div class="lrow"><svg viewBox="0 0 24 24"><use href="#i-virtG"/></svg></div>
    <div class="lrow"><svg viewBox="0 0 24 24"><use href="#l-pg"/></svg><em class="ar a12"></em></div>
    <div class="lrow"><svg viewBox="0 0 24 24"><use href="#l-wms"/></svg><em class="ar a12"></em></div>
    <div class="lrow"><svg viewBox="0 0 24 24"><use href="#l-wcs"/></svg></div>
    <div class="lrow"><svg viewBox="0 0 24 24"><use href="#l-wfs"/></svg><em class="ar a12"></em></div>
    <div class="lrow"><svg viewBox="0 0 24 24"><use href="#i-chip"/></svg><em class="ar a12"></em></div>
  </aside>
  <section class="panel">
    <div class="ptitle"><span>Camadas</span>
      <div class="pbtns">
        <svg viewBox="0 0 12 12"><rect x=".5" y=".5" width="11" height="11" rx="2" fill="#e4e4e4" stroke="#666"/><path d="M4.500 2.500h5v5h-5zM2.500 4.500h5v5h-5z" fill="none" stroke="#444"/></svg>
        <svg viewBox="0 0 12 12"><rect x=".5" y=".5" width="11" height="11" rx="2" fill="#e4e4e4" stroke="#666"/><path d="M3 3l6 6M9 3l-6 6" stroke="#222" stroke-width="1.600"/></svg>
      </div>
    </div>
    <div class="ptools">
      <svg viewBox="0 0 24 24"><use href="#p-brush"/></svg><svg viewBox="0 0 24 24"><use href="#p-dup"/></svg><svg viewBox="0 0 24 24"><use href="#p-eye"/></svg><svg viewBox="0 0 24 24"><use href="#p-funnel"/></svg><svg viewBox="0 0 24 24"><use href="#p-exp"/></svg><em class="ar a12"></em><svg viewBox="0 0 24 24"><use href="#p-down"/></svg><svg viewBox="0 0 24 24"><use href="#p-up"/></svg><svg viewBox="0 0 24 24"><use href="#p-rem"/></svg>
    </div>
    <div class="tree">
      <div class="node"><span class="chk"><svg viewBox="0 0 14 14"><path d="M3 7l3 4 5-8" fill="none" stroke="#111" stroke-width="2"/></svg></span><span class="sym"><span class="dot"></span></span><span class="nm">focos</span></div>
      <div class="node"><span class="chk"><svg viewBox="0 0 14 14"><path d="M3 7l3 4 5-8" fill="none" stroke="#111" stroke-width="2"/></svg></span><span class="sym"><span class="sw"></span></span><span class="nm ul">centro_sul</span></div>
    </div>
  </section>
  <div class="split"><i></i></div>
  <section class="canvas">
    <svg class="map" viewBox="364 178 1555 832">
      <polygon class="region" points="594.3,752.3 600,710 605,669.3 632.3,632.3 628.3,625.7 640,619.7 631.300,614.300 634,589.300 629.700,576.700 631.700,559 641.700,555 650.300,546 656.700,532 682.300,530.300 689.300,533.700 701,529.300 712.300,520.300 730,519.300 737,515 741.700,508.300 748,515.700 742.700,528 748.300,525 753.300,526.300 755.700,531.700 759,533 753.700,538.300 756,541 765,540 770.300,532.700 786.300,527.300 786,519.300 818,488.300 814,482 822,480 825.700,475.300 824.300,482 828.700,484 833.300,490 841,493.300 845,488 868.700,475.700 871.700,478.300 885.300,479.300 887.300,488.300 910,473.300 912.300,468.700 911.700,462.700 920,457.300 935.700,452 930,445.700 911.700,455.300 917.300,443.300 914,439 922.300,437 923.300,430 932.300,423.300 931.300,418.700 922.300,411.700 922.300,407.300 933.300,400 912.700,385 915,377.300 911.700,371.700 911.700,364 946.700,330 965,332 975.700,324 985,325.700 991.300,319.300 1005,330 1012.300,324.300 1020,327.300 1020,332.300 1034,327 1041.700,331.300 1044,326.300 1047.300,326.300 1046,307 1066,299.300 1066,292 1078.700,277 1086,278 1092,284 1133.300,241.700 1184.300,252.700 1211.300,238.300 1205.700,222.700 1213.300,209.300 1224,202.300 1223.300,198.300 1217.700,192.300 1219,192 1226,197.700 1242.300,194.700 1250,197.700 1252.300,207.700 1250,220 1254.700,232 1259.300,226 1272,220.700 1285,223.300 1285.700,235.700 1302.700,241.300 1303.300,246.300 1309,246 1310.700,243.300 1312.300,244.300 1321.300,240 1322.700,245.300 1327.700,244.700 1331.700,239.300 1337.700,236 1345.700,240 1350,235 1354,235 1359.300,240 1369.300,234.300 1360.700,251.300 1360,263.300 1363.300,273.300 1381.700,278 1393.700,266.700 1407.700,261 1420.700,248.300 1425,248.700 1430,245.300 1436.700,253.300 1442.300,254 1445.300,258.300 1454,258.300 1454.300,263.300 1448.300,268.300 1451.300,275 1447.700,280 1451.300,284 1449,288.300 1441.700,292.300 1434,304.300 1428.700,306.700 1431.700,316.700 1425.300,324 1427.700,336.700 1433.300,340.300 1426.700,342.700 1416.700,354.300 1429.300,360.300 1441.700,360 1447.700,356.700 1452.300,362.300 1443.300,366.700 1435,380.700 1429.300,385.700 1428.300,390 1412.300,406.700 1412.700,416.700 1400,436 1405,446.700 1397.300,453.300 1392.700,463.300 1397.700,473.300 1390,478.300 1383.700,494.300 1393.300,499.300 1395.300,511.700 1403.300,521.700 1411.700,523.300 1410,528.300 1399.300,526.700 1402,532.300 1395.700,535 1394.300,541.700 1385,544 1379.300,561.700 1370,563.300 1366.700,568.300 1346.700,578.300 1350.300,590.700 1347.300,595.700 1353.300,598.300 1356.300,605.700 1352.300,611.700 1346.700,614.700 1377.300,628.300 1378,633.300 1382.700,636 1384.300,645.700 1393,656.700 1384.300,672.700 1385,685 1381,687.300 1384,690.700 1379.700,698.300 1393.300,695.300 1408.300,700.700 1409.300,716 1411.700,718 1415.700,717.300 1416.700,718.300 1418.300,716.700 1418,721.700 1422.700,725 1437,720.700 1437.300,729 1444.700,742.300 1438.300,753.300 1438,763.300 1419.300,793.300 1423.300,796 1423.300,803.300 1416,806.700 1415.300,814 1397.700,816 1404.300,825.700 1393.700,841 1393.300,860 1370,868.300 1366,889 1358.300,890 1355.700,901 1346.700,899 1335,905.300 1322.700,902.700 1320.700,908.300 1324.700,916.700 1319.300,925.700 1311.700,927 1301.700,922.700 1297,929 1296.700,938.300 1290,940 1282.300,936.700 1281,942 1276.700,940.300 1270.700,943.300 1268.700,953.300 1271,959 1260.700,972.300 1262.700,977.700 1260,980.300 1245,977.700 1240,966.700 1237.300,966.700 1232.700,972.300 1221.300,969.300 1217.700,975.700 1206,985.300 1203.700,981.300 1207.300,977.300 1206.300,964.300 1200.700,956 1200,945 1185,925.700 1172.300,924 1156,913.300 1141.700,917.300 1141,911 1130,903.300 1115.700,903.700 1112,899.700 1115.700,894.300 1115.700,886 1125.300,877 1118.300,873.300 1111.700,863.300 1109.300,851 1085,827.700 1070,819.300 1050,812.700 1033.300,798.300 1003.300,780 985.700,762.300 967.300,756 960.700,750.700 920,755 906.700,760 889,760 879.300,756.700 865,763.300 848,762 827.300,767 816.700,778.300 803.300,776.700 790,768.700 757.300,773.300 742.300,783.700 728.300,772.700 710,750.700 693.300,746.700 680,747.300 667.700,759 659.300,772.700 647.700,776 619.300,761.300 610.700,760.700"/>
      <g class="pts">
<circle cx="642" cy="763"/><circle cx="760" cy="698"/><circle cx="746" cy="707"/><circle cx="756" cy="716"/><circle cx="794" cy="721"/><circle cx="848" cy="761"/><circle cx="854" cy="620"/><circle cx="881" cy="675"/><circle cx="923" cy="720"/><circle cx="958" cy="643"/>
<circle cx="1086" cy="310"/><circle cx="983" cy="360"/><circle cx="1112" cy="345"/><circle cx="1108.300" cy="367"/><circle cx="1111" cy="366"/><circle cx="1071.700" cy="379"/><circle cx="1000" cy="400"/><circle cx="1043.700" cy="400.700"/><circle cx="1043.700" cy="405"/><circle cx="1118" cy="394"/><circle cx="1118" cy="387.700"/><circle cx="1115" cy="392.700"/><circle cx="1123" cy="394"/><circle cx="1136" cy="409"/><circle cx="1141" cy="414"/><circle cx="1141" cy="409"/><circle cx="1155" cy="409.300"/><circle cx="1151" cy="409"/><circle cx="1159" cy="409"/><circle cx="1112" cy="427"/><circle cx="1124" cy="428"/><circle cx="1121" cy="428"/>
<circle cx="984" cy="445"/><circle cx="992" cy="447"/><circle cx="986.300" cy="455"/><circle cx="981" cy="454"/><circle cx="1090.700" cy="458"/><circle cx="1027" cy="467"/><circle cx="1027" cy="473"/><circle cx="1038" cy="468"/><circle cx="1044" cy="477"/><circle cx="1042" cy="471"/><circle cx="1036.700" cy="475"/><circle cx="1032" cy="481"/><circle cx="1035" cy="481"/><circle cx="1040" cy="481"/><circle cx="1043" cy="483"/>
<circle cx="1152" cy="477"/><circle cx="1097.300" cy="485"/><circle cx="1094" cy="484"/><circle cx="947" cy="496"/><circle cx="997.700" cy="502"/><circle cx="999" cy="509"/><circle cx="994" cy="515"/><circle cx="950" cy="535"/><circle cx="946" cy="534"/><circle cx="936" cy="554"/>
<circle cx="1055" cy="551"/><circle cx="1049" cy="550"/><circle cx="1053" cy="550"/><circle cx="996" cy="563"/><circle cx="996" cy="558"/><circle cx="994" cy="567"/><circle cx="993" cy="564"/><circle cx="996" cy="573"/><circle cx="983" cy="588"/><circle cx="1008" cy="592"/><circle cx="1074" cy="591"/><circle cx="1071" cy="588"/><circle cx="1022" cy="693"/><circle cx="1017" cy="693"/>
<circle cx="1110" cy="629"/><circle cx="1140" cy="645"/><circle cx="1142" cy="648"/><circle cx="1131" cy="676"/><circle cx="1088" cy="680"/><circle cx="1118" cy="688"/><circle cx="1114" cy="693"/><circle cx="1092" cy="706"/><circle cx="1088" cy="706"/><circle cx="1141" cy="709"/><circle cx="1136" cy="708"/><circle cx="1170" cy="706"/><circle cx="1165" cy="705"/><circle cx="1172" cy="718"/><circle cx="1167" cy="717"/><circle cx="1124" cy="722"/><circle cx="1079" cy="726"/><circle cx="1169" cy="726"/><circle cx="1170" cy="725"/><circle cx="1177" cy="725"/>
<circle cx="1295.700" cy="275"/><circle cx="1205.700" cy="305"/><circle cx="1215" cy="305"/><circle cx="1219" cy="325"/><circle cx="1224" cy="325"/><circle cx="1410" cy="332"/><circle cx="1424.700" cy="344.700"/><circle cx="1420.700" cy="387"/><circle cx="1403.700" cy="395"/><circle cx="1399" cy="424"/>
<circle cx="1324" cy="380"/><circle cx="1316.700" cy="384"/><circle cx="1309" cy="385"/><circle cx="1313.300" cy="385"/><circle cx="1312" cy="383"/><circle cx="1330" cy="386.700"/><circle cx="1332.700" cy="386"/><circle cx="1357.300" cy="382.300"/><circle cx="1354" cy="385"/><circle cx="1360.700" cy="389"/><circle cx="1303.700" cy="395"/><circle cx="1312.700" cy="394"/><circle cx="1355" cy="403.300"/><circle cx="1351" cy="399"/><circle cx="1360" cy="400"/><circle cx="1356" cy="399"/><circle cx="1342.700" cy="405.700"/><circle cx="1345" cy="407"/><circle cx="1338.700" cy="409"/><circle cx="1336.700" cy="414.300"/><circle cx="1321.700" cy="415.700"/><circle cx="1319" cy="413"/><circle cx="1326.700" cy="414"/><circle cx="1332.700" cy="413"/><circle cx="1349" cy="418"/><circle cx="1309" cy="420.700"/><circle cx="1326.700" cy="421.700"/><circle cx="1323.300" cy="420.700"/><circle cx="1330" cy="420"/><circle cx="1341.700" cy="425"/><circle cx="1325.700" cy="425"/><circle cx="1333.300" cy="426"/><circle cx="1322.300" cy="427.300"/><circle cx="1336" cy="429"/><circle cx="1330" cy="428.700"/><circle cx="1306" cy="427"/><circle cx="1304" cy="430.700"/><circle cx="1303" cy="435.700"/><circle cx="1299" cy="434"/><circle cx="1332" cy="434.700"/><circle cx="1328" cy="435.700"/><circle cx="1354" cy="437.300"/><circle cx="1355" cy="434"/><circle cx="1346" cy="440.700"/><circle cx="1340.700" cy="448.300"/><circle cx="1341.700" cy="444"/><circle cx="1260" cy="454"/><circle cx="1282" cy="455"/><circle cx="1325" cy="457"/><circle cx="1320" cy="463"/><circle cx="1311" cy="466.700"/><circle cx="1315" cy="468"/><circle cx="1343.300" cy="463.700"/><circle cx="1346" cy="465.700"/><circle cx="1360" cy="458"/><circle cx="1322.700" cy="477"/>
<circle cx="1212.700" cy="394"/><circle cx="1215" cy="395"/><circle cx="1213" cy="404"/><circle cx="1159" cy="408.700"/><circle cx="1175" cy="451"/><circle cx="1170" cy="450"/><circle cx="1178" cy="486"/><circle cx="1172" cy="486"/><circle cx="1182.700" cy="493"/><circle cx="1189" cy="483"/><circle cx="1195" cy="481"/><circle cx="1199" cy="474.300"/><circle cx="1200.700" cy="476.700"/><circle cx="1274" cy="492"/><circle cx="1285" cy="496"/>
<circle cx="1122" cy="507"/><circle cx="1113" cy="512"/><circle cx="1119" cy="512"/><circle cx="1122" cy="513"/><circle cx="1128" cy="513"/><circle cx="1135" cy="507"/><circle cx="1132" cy="509"/><circle cx="1133" cy="506"/><circle cx="1157" cy="520"/><circle cx="1222.700" cy="502"/><circle cx="1230" cy="507"/><circle cx="1232.700" cy="503"/><circle cx="1220" cy="510"/><circle cx="1275" cy="504"/><circle cx="1279" cy="503"/><circle cx="1274" cy="503"/>
<circle cx="1129" cy="563"/><circle cx="1207" cy="556"/><circle cx="1240" cy="558"/><circle cx="1372" cy="544"/><circle cx="1382" cy="552"/><circle cx="1352" cy="564"/><circle cx="1354" cy="572"/><circle cx="1355" cy="566"/><circle cx="1318" cy="578"/><circle cx="1318" cy="582"/><circle cx="1314" cy="581"/><circle cx="1148" cy="580"/><circle cx="1174" cy="581"/><circle cx="1162" cy="596"/><circle cx="1215" cy="594"/><circle cx="1214" cy="599"/>
<circle cx="1342.300" cy="596.700"/><circle cx="1342" cy="602.300"/><circle cx="1340" cy="598"/><circle cx="1336" cy="601"/><circle cx="1336.300" cy="598"/><circle cx="1304" cy="608.700"/><circle cx="1304" cy="615"/><circle cx="1302" cy="612.700"/><circle cx="1304" cy="612.700"/><circle cx="1157" cy="611"/><circle cx="1164" cy="612"/><circle cx="1327" cy="613"/><circle cx="1334" cy="626"/><circle cx="1331" cy="627"/><circle cx="1335" cy="628"/><circle cx="1158" cy="630"/>
<circle cx="1217.300" cy="680"/><circle cx="1214" cy="679"/><circle cx="1210" cy="679"/><circle cx="1205" cy="678"/><circle cx="1201.300" cy="677"/><circle cx="1312" cy="674"/><circle cx="1348" cy="673"/><circle cx="1228" cy="715"/><circle cx="1223" cy="714"/><circle cx="1282" cy="730"/><circle cx="1278" cy="729"/><circle cx="1220" cy="742"/><circle cx="1336" cy="737"/><circle cx="1341" cy="747"/><circle cx="1108" cy="743"/><circle cx="1104" cy="743"/><circle cx="1149" cy="744"/><circle cx="1181" cy="745"/><circle cx="1088" cy="749"/><circle cx="1086" cy="753"/><circle cx="1176" cy="752"/><circle cx="1178" cy="752"/><circle cx="1148" cy="759"/><circle cx="1151" cy="757"/><circle cx="1200" cy="764"/><circle cx="1196" cy="763"/><circle cx="1101" cy="769"/><circle cx="1106" cy="770"/><circle cx="1154" cy="780"/><circle cx="1428" cy="775"/><circle cx="1419" cy="778"/><circle cx="1425" cy="775"/>
<circle cx="1222.700" cy="794"/><circle cx="1095" cy="803"/><circle cx="1119.700" cy="810"/><circle cx="1114.700" cy="810"/><circle cx="1326.700" cy="796"/><circle cx="1336" cy="800"/><circle cx="1332" cy="797"/><circle cx="1335" cy="804"/><circle cx="1339" cy="804"/><circle cx="1280.700" cy="820.700"/><circle cx="1283" cy="822"/><circle cx="1293" cy="823"/><circle cx="1182" cy="850"/><circle cx="1222" cy="850"/><circle cx="1228" cy="851"/><circle cx="1240.700" cy="862"/><circle cx="1139" cy="860"/><circle cx="1286" cy="856"/><circle cx="1289" cy="856"/><circle cx="1223" cy="880.300"/><circle cx="1246" cy="963"/>
      </g>
    </svg>
  </section>
</main>

<footer class="status">
  <div class="locator"><svg viewBox="0 0 14 14"><circle cx="6" cy="6" r="4.500" fill="none" stroke="#888" stroke-width="1.100"/><path d="M9.500 9.500l4 4" stroke="#888" stroke-width="1.300"/></svg><span>Escreva para localizar (Ctrl+K)</span></div>
  <div class="sright">
    <span class="lb w60">Coordenada</span>
    <span class="inp w100">274616,9223173</span>
    <svg class="sic m4" viewBox="0 0 18 18"><path d="M3 2c3 1 3 3 5 4s5 2 5 5-3 5-5 4-3-3-4-5 1-3 3-2 2 3 3 3M11 1c2 1 4 2 5 4" fill="none" stroke="#333" stroke-width="1.500"/><path d="M13 10l4 6" stroke="#333"/></svg>
    <span class="lb w31 m11">Escala</span>
    <span class="inp w80 combo">1:972123<em class="ar"></em></span>
    <svg class="sic lock" viewBox="0 0 16 18"><path d="M4.500 8V5a3.500 3.500 0 0 1 7 0v3" fill="none" stroke="#666" stroke-width="1.800"/><rect x="2.500" y="8" width="11" height="9" rx="1" fill="#666"/></svg>
    <span class="lb w25 m6">Lupa</span>
    <span class="inp w87 spin">100%<span class="sp2"></span></span>
    <span class="lb w40 m9">Rotação</span>
    <span class="inp w84 spin m10">0,0 °<span class="sp2"></span></span>
    <span class="chk2"><svg viewBox="0 0 14 14"><path d="M3 7l3 4 5-8" fill="none" stroke="#111" stroke-width="2"/></svg></span>
    <span class="lb w52 m5">Renderizar</span>
    <svg class="sic2" viewBox="0 0 16 16"><circle cx="8" cy="8" r="6.500" fill="#b8b8b8" stroke="#666"/><path d="M1.500 8h13M8 1.500v13M3 4.500h10M3 11.500h10M5 2.500c-2 4-2 7 0 11M11 2.500c2 4 2 7 0 11" fill="none" stroke="#fff" stroke-width=".7"/></svg>
    <span class="lb w61 m3">EPSG:31984</span>
    <svg class="sic3" viewBox="0 0 18 18"><path d="M9 1c5 0 8 3 8 7s-3 7-8 7H6l-3 3v-4c-1-1-2-3-2-6 0-4 3-7 8-7z" fill="#666"/><circle cx="5.500" cy="8" r="1.200" fill="#fff"/><circle cx="9" cy="8" r="1.200" fill="#fff"/><circle cx="12.500" cy="8" r="1.200" fill="#fff"/></svg>
  </div>
</footer>
</div>
</body>
</html>
```

FILE: styles.css
```css
* { box-sizing: border-box; }
html, body { margin: 0; padding: 0; height: 100%; overflow: hidden; }
body { font-family: "Roboto", "Liberation Sans", sans-serif; font-size: 12px; color: #111; background: #f0f0f0; }
.defs { width: 0; height: 0; display: block; position: absolute; }
.svt { font-family: "Liberation Sans", sans-serif; font-weight: 700; }
.svt.n { font-weight: 400; }

.app { width: 1920px; height: 1040px; display: flex; flex-direction: column; }

.titlebar { height: 23px; background: #fff; display: flex; align-items: center; padding-left: 2px; flex: none; }
.qlogo { width: 17px; height: 17px; flex: none; }
.title { margin-left: 4px; font-size: 12px; }
.winbtns { margin-left: auto; display: flex; gap: 34px; padding-right: 19px; align-items: center; height: 100%; padding-bottom: 3px; }
.winbtns svg { width: 12px; height: 12px; display: block; }

.menubar { height: 20px; background: #efefef; border-bottom: 1px solid #d8d8d8; display: flex; gap: 14px; padding-left: 10px; align-items: center; flex: none; font-size: 12px; letter-spacing: -.12px; }
.menubar span { white-space: nowrap; }
.menubar u { text-underline-offset: 2px; }

.tb { height: 39px; flex: none; display: flex; align-items: center; background: linear-gradient(#f9f9f9, #efefef); border-bottom: 1px solid #b9b9b9; padding-left: 4px; }
.tb.short { height: 16px; }
.tb b { width: 33px; height: 30px; flex: none; display: flex; align-items: center; justify-content: center; }
.tb b svg { width: 24px; height: 24px; display: block; }
.tb b.off svg { filter: grayscale(1) opacity(.35); }
.tb b.on { background: #dcdcdc; border: 1px solid #adadad; border-radius: 3px; }

.hd { display: block; flex: none; height: 22px; background-image: radial-gradient(circle, #a9a9a9 .7px, transparent .9px); background-size: 3px 3px; background-repeat: repeat; background-clip: content-box; }
.h8 { width: 8px; padding: 0 3px 0 0; }
.h13 { width: 13px; padding: 0 0 0 9px; }
.h14 { width: 15.5px; padding: 0 7.5px 0 3px; height: 22px; }
.h15 { width: 15.5px; padding: 0 5px 0 5px; }
.h15.t1 { width: 16.5px; padding: 0 6px 0 5px; }
.h16 { width: 16.25px; padding: 0 5px 0 6px; }
.h18 { width: 17px; padding: 0 4px 0 8px; }

.sp { display: block; flex: none; height: 24px; position: relative; }
.sp::after { content: ""; display: block; width: 1px; height: 100%; background: #cfcfcf; margin: 0 auto; }
.w6 { width: 6px; } .w7 { width: 7px; } .w9 { width: 9px; }

.ar { display: flex; align-items: center; justify-content: center; flex: none; width: 12px; height: 12px; }
.ar::after { content: ""; border-left: 4px solid transparent; border-right: 4px solid transparent; border-top: 4px solid #777; }
.a11 { width: 11px; } .a12 { width: 12px; } .a13 { width: 13px; } .a15 { width: 15px; }

.main { flex: none; height: 834px; display: flex; margin-top: 1px; }
.lefttb { width: 52px; border-right: 1px solid #b9b9b9; background: linear-gradient(90deg, #f9f9f9, #efefef); flex: none; display: flex; flex-direction: column; }
.hdh { display: block; height: 11px; margin-left: 18px; width: 18px; background-image: radial-gradient(circle, #a9a9a9 .7px, transparent .9px); background-size: 3px 3px; flex: none; }
.lrow { height: 32px; display: flex; align-items: center; padding-left: 8px; flex: none; }
.lrow svg { width: 24px; height: 24px; display: block; flex: none; }
.lrow .ar { margin-left: 4px; }

.panel { width: 305px; flex: none; display: flex; flex-direction: column; background: #f0f0f0; }
.ptitle { height: 20px; display: flex; align-items: center; padding: 0 2px 1px 4px; flex: none; font-size: 11.5px; }
.pbtns { margin-left: auto; display: flex; gap: 3px; }
.pbtns svg { width: 11px; height: 11px; display: block; }
.ptools { height: 30px; display: flex; align-items: center; padding: 0 0 4px 8px; gap: 9px; flex: none; }
.ptools svg { width: 16px; height: 16px; display: block; flex: none; }
.ptools .ar { margin-left: -5px; margin-right: -3px; }
.tree { flex: 1; background: #fff; border: 1px solid #b9b9b9; padding: 1px 0 0 23px; position: relative; }
.tree::before, .tree::after { content: ""; position: absolute; right: 1px; width: 3px; height: 17px; background: #e6e6e6; }
.tree::before { top: 1px; }
.tree::after { top: 19px; }
.node { height: 18px; display: flex; align-items: center; font-weight: 700; font-size: 12px; }
.chk, .chk2 { width: 14px; height: 13px; border: 1px solid #aaa; background: #fff; display: block; flex: none; }
.chk svg, .chk2 svg { width: 12px; height: 11px; display: block; }
.sym { width: 16px; height: 16px; margin-left: 6px; display: flex; align-items: center; justify-content: center; flex: none; }
.dot { width: 7px; height: 7px; border-radius: 50%; background: #e5ae2c; border: 1px solid #8a8a66; display: block; }
.sw { width: 16px; height: 16px; background: #7c888b; border: 1px solid #555; display: block; }
.nm { margin-left: 6px; color: #000; }
.nm.ul { text-decoration: underline; }

.split { width: 6px; flex: none; background: #f0f0f0; display: flex; align-items: center; justify-content: center; }
.split i { display: block; width: 3px; height: 12px; background-image: radial-gradient(circle, #b0b0b0 .7px, transparent .9px); background-size: 3px 3px; }
.canvas { flex: 1; min-width: 0; background: #fff; border: 1px solid #b9b9b9; border-right: 0; }
.map { width: 1555px; height: 832px; display: block; }
.region { fill: #7c888b; stroke: #3f474b; stroke-width: 1; stroke-linejoin: miter; }
.pts circle { r: 3.800px; fill: #ecb52f; stroke: #3d3d3d; stroke-width: 1px; }

.status { flex: 1; display: flex; align-items: center; padding-left: 4px; background: #f0f0f0; font-size: 11px; }
.locator { width: 261px; height: 22px; border: 1px solid #b3b3b3; border-radius: 2px; background: #fff; display: flex; align-items: center; padding-left: 8px; color: #707070; letter-spacing: -.1px; }
.locator svg { width: 14px; height: 14px; flex: none; }
.locator span { margin-left: 5px; }
.sright { margin-left: auto; display: flex; align-items: center; padding-right: 8px; }
.lb { white-space: nowrap; display: block; flex: none; }
.w60 { width: 60px; margin-right: 3px; }
.w31 { width: 31px; margin-right: 3px; }
.w25 { width: 25px; margin-right: 2px; }
.w40 { width: 40px; }
.w52 { width: 52px; }
.w61 { width: 61px; }
.m3 { margin-left: 3px; } .m4 { margin-left: 4px; } .m5 { margin-left: 5px; } .m6 { margin-left: 6px; } .m9 { margin-left: 9px; } .m10 { margin-left: 10px; } .m11 { margin-left: 11px; }
.inp { height: 21px; background: #fff; border: 1px solid #b3b3b3; border-radius: 2px; display: flex; align-items: center; padding-left: 3px; flex: none; position: relative; white-space: nowrap; }
.w100 { width: 100px; padding-left: 8px; }
.w80 { width: 80px; }
.w87 { width: 87px; padding-left: 4px; }
.w84 { width: 84px; padding-left: 4px; }
.combo .ar { position: absolute; right: 0; top: 0; width: 19px; height: 19px; border-left: 1px solid #d0d0d0; }
.sp2 { position: absolute; right: 0; top: 0; width: 13px; height: 19px; border-left: 1px solid #d8d8d8; }
.sp2::before, .sp2::after { content: ""; position: absolute; left: 3px; border-left: 3px solid transparent; border-right: 3px solid transparent; }
.sp2::before { top: 4px; border-bottom: 4px solid #666; }
.sp2::after { top: 11px; border-top: 4px solid #666; }
.sic { width: 18px; height: 18px; display: block; flex: none; }
.sic.lock { width: 16px; margin-left: 11px; }
.sic2 { width: 15px; height: 15px; margin-left: 19px; flex: none; display: block; }
.sic3 { width: 17px; height: 17px; margin-left: 16px; flex: none; display: block; }
.chk2 { margin-left: 7px; width: 12px; height: 14px; }
.chk2 svg { width: 10px; height: 12px; }
```
